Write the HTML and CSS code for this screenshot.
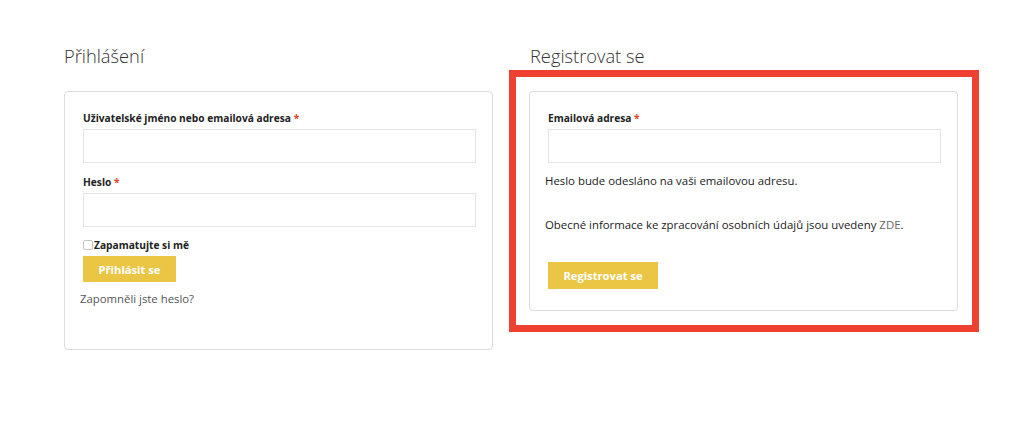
FILE: index.html
```html
<!DOCTYPE html>
<html lang="cs">
<head>
<meta charset="utf-8">
<title>Přihlášení</title>
<link rel="stylesheet" href="styles.css">
</head>
<body>
<div class="page">
  <section class="col">
    <h2 class="title">Přihlášení</h2>
    <form class="card card-login">
      <label class="label">Uživatelské jméno nebo emailová adresa <span class="req">*</span></label>
      <input class="input" type="text">
      <label class="label label-next">Heslo <span class="req">*</span></label>
      <input class="input" type="password">
      <label class="remember"><span class="check"></span>Zapamatujte si mě</label>
      <button class="btn btn-login" type="button">Přihlásit se</button>
      <a class="lost" href="#">Zapomněli jste heslo?</a>
    </form>
  </section>
  <section class="col">
    <h2 class="title">Registrovat se</h2>
    <form class="card card-reg">
      <label class="label">Emailová adresa <span class="req">*</span></label>
      <input class="input" type="email">
      <p class="text text-first">Heslo bude odesláno na vaši emailovou adresu.</p>
      <p class="text text-second">Obecné informace ke zpracování osobních údajů jsou uvedeny <a class="link" href="#">ZDE</a>.</p>
      <button class="btn btn-reg" type="button">Registrovat se</button>
    </form>
  </section>
</div>
</body>
</html>
```
FILE: styles.css
```css
* { box-sizing: border-box; }
html, body { margin: 0; padding: 0; background: #fff; }
body {
  font-family: "Open Sans", "Noto Sans", "Liberation Sans", sans-serif;
  color: #222;
  width: 1024px;
  height: 436px;
  overflow: hidden;
}
.page {
  display: flex;
  gap: 36px;
  padding: 0 0 0 64px;
}
.col {
  width: 429px;
  display: flex;
  flex-direction: column;
}
.title {
  margin: 42px 0 0 0;
  height: 49px;
  font-size: 18.3px;
  font-weight: 300;
  line-height: 28px;
  color: #333;
}
.col + .col .title { padding-left: 1px; }
.card {
  display: flex;
  flex-direction: column;
  align-items: flex-start;
  border: 1px solid #dcdcdc;
  border-radius: 4px;
  padding: 17px 17px 0 18px;
  background: #fff;
}
.card-login { height: 259px; }
.card-reg {
  position: relative;
  height: 220px;
}
.card-reg::after {
  content: "";
  position: absolute;
  top: -22px;
  left: -21px;
  right: -22px;
  bottom: -22px;
  border: 7px solid #ee4130;
  pointer-events: none;
}
.label {
  font-size: 10.2px;
  font-weight: 700;
  line-height: 18px;
  color: #222;
  margin-bottom: 2px;
}
.label-next { margin-top: 10px; }
.req { color: #e2401c; }
.input {
  width: 393px;
  height: 34px;
  margin: 0;
  border: 1px solid #e4e4e4;
  border-radius: 0;
  background: #fff;
  padding: 0 8px;
}
.remember {
  display: flex;
  align-items: center;
  margin-top: 9px;
  font-size: 10.2px;
  font-weight: 700;
  line-height: 18px;
  color: #222;
}
.check {
  width: 10px;
  height: 10px;
  border: 1px solid #c4c4c4;
  border-radius: 2px;
  margin-right: 1px;
  background: #fff;
}
.btn {
  border: 0;
  background: #ebc645;
  color: #fff;
  font-family: inherit;
  font-size: 11.2px;
  font-weight: 700;
  padding: 0;
  cursor: pointer;
}
.btn-login {
  margin-top: 2px;
  width: 93px;
  height: 26px;
}
.lost {
  margin: 8px 0 0 -3px;
  font-size: 11.35px;
  line-height: 18px;
  color: #555;
  text-decoration: none;
}
.text {
  margin: 0;
  font-size: 11.4px;
  line-height: 18px;
  color: #222;
  margin-left: -3px;
}
.text-first { margin-top: 9px; }
.text-second { margin-top: 26px; }
.link { color: #666; text-decoration: none; }
.btn-reg {
  margin-top: 28px;
  width: 110px;
  height: 27px;
}
```
